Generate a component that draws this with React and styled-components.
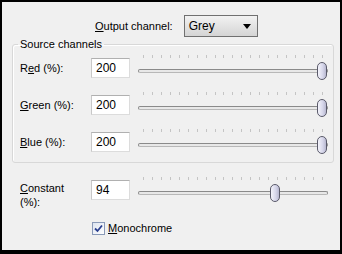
import React from "react";
import styled, { createGlobalStyle } from "styled-components";

const Global = createGlobalStyle`
  html, body { margin: 0; padding: 0; background: #000; }
  body { font-family: Tahoma, "Liberation Sans", Arial, sans-serif; font-size: 11px; color: #000; }
`;

const Frame = styled.div`
  width: 342px;
  height: 254px;
  box-sizing: border-box;
  border: 2px solid #000;
  border-bottom-width: 4px;
  background: #f0f0f0;
  padding-top: 13px;
  display: flex;
  flex-direction: column;
`;

const OutputRow = styled.div`
  display: flex;
  align-items: center;
  padding-left: 93px;
  gap: 11px;
  height: 22px;
`;

const Text = styled.span`
  line-height: 13px;
  white-space: nowrap;
`;

const U = styled.span`
  text-decoration: underline;
  text-underline-offset: 1px;
`;

const Select = styled.div`
  width: 74px;
  height: 22px;
  box-sizing: border-box;
  border: 1px solid #707070;
  background: linear-gradient(#f2f2f2, #e2e2e2 55%, #d4d4d4);
  display: flex;
  align-items: center;
  justify-content: space-between;
  padding: 0 6px 0 4px;
  font-size: 12px;
`;

const Arrow = styled.svg`
  width: 8px;
  height: 5px;
`;

const Group = styled.fieldset`
  margin: 1px 6px 0 10px;
  padding: 3px 3px 8px 7px;
  border: 1px solid #d8d8d8;
  border-radius: 3px;
  box-shadow: inset 1px 1px 0 #fff;
  display: flex;
  flex-direction: column;
  gap: 11px;
  min-width: 0;
`;

const Legend = styled.legend`
  padding: 0 2px;
  margin-left: -2px;
  line-height: 13px;
  font-size: 11px;
`;

const Row = styled.div`
  display: flex;
  align-items: flex-start;
  height: 26px;
  padding-left: ${(p) => p.$indent || 0}px;
  margin-top: ${(p) => p.$top || 0}px;
`;

const Label = styled.label`
  width: 60px;
  margin-right: 11px;
  margin-top: ${(p) => (p.$multi ? 5 : 7)}px;
  line-height: ${(p) => (p.$multi ? 14 : 15)}px;
  display: flex;
  flex-direction: column;
`;

const Line = styled.span`
  display: block;
  white-space: nowrap;
`;

const Input = styled.div`
  width: 39px;
  height: 20px;
  box-sizing: border-box;
  margin-top: 4px;
  margin-right: 8px;
  border: 1px solid #dcdcdc;
  border-top-color: #b0b0b0;
  border-left-color: #c8c8c8;
  background: #fff;
  padding-left: 4px;
  font-size: 12px;
  line-height: 18px;
`;

const Slider = styled.div`
  position: relative;
  width: 190px;
  height: 26px;
`;

const Ticks = styled.div`
  display: flex;
  justify-content: space-between;
  padding: 0 5px;
  margin-top: 1px;
  height: 3px;
`;

const Tick = styled.i`
  width: 1px;
  height: 3px;
  background: #c4c4c4;
`;

const Track = styled.div`
  margin-top: 11px;
  height: 4px;
  box-sizing: border-box;
  border: 1px solid #8a8a8a;
  border-bottom-color: #b8b8b8;
  border-radius: 2px;
  background: #e8e8e8;
`;

const Thumb = styled.div`
  position: absolute;
  top: 8px;
  width: 10px;
  height: 18px;
  box-sizing: border-box;
  border: 1px solid #5a5a6a;
  border-radius: 5px;
  background: linear-gradient(90deg, #f4f4fb, #d6d6ea 60%, #b8b8d0);
`;

const CheckRow = styled.label`
  display: flex;
  align-items: center;
  gap: 3px;
  padding-left: 90px;
  margin-top: 20px;
  height: 13px;
`;

const Box = styled.span`
  width: 13px;
  height: 13px;
  box-sizing: border-box;
  border: 1px solid #8a9ab8;
  background: linear-gradient(135deg, #dde4f0, #ffffff);
  display: flex;
  align-items: center;
  justify-content: center;
`;

const TickMark = styled.svg`
  width: 9px;
  height: 9px;
`;

const MIN = -200;
const MAX = 200;

function SliderCtl({ value }) {
  const frac = (value - MIN) / (MAX - MIN);
  return (
    <Slider>
      <Ticks>
        {Array.from({ length: 21 }).map((_, i) => (
          <Tick key={i} />
        ))}
      </Ticks>
      <Track />
      <Thumb style={{ left: Math.round(frac * 179) }} />
    </Slider>
  );
}

const channels = [
  { pre: "R", key: "e", post: "d (%):", value: 200 },
  { pre: "", key: "G", post: "reen (%):", value: 200 },
  { pre: "", key: "B", post: "lue (%):", value: 200 },
];

export default function App() {
  return (
    <>
      <Global />
      <Frame>
        <OutputRow>
          <Text>
            <U>O</U>utput channel:
          </Text>
          <Select>
            <span>Grey</span>
            <Arrow viewBox="0 0 8 5">
              <path d="M0 0H8L4 5Z" fill="#000" />
            </Arrow>
          </Select>
        </OutputRow>
        <Group>
          <Legend>Source channels</Legend>
          {channels.map((c) => (
            <Row key={c.post}>
              <Label>
                <Line>
                  {c.pre}
                  <U>{c.key}</U>
                  {c.post}
                </Line>
              </Label>
              <Input>{c.value}</Input>
              <SliderCtl value={c.value} />
            </Row>
          ))}
        </Group>
        <Row $indent={18} $top={13}>
          <Label $multi>
            <Line>
              <U>C</U>onstant
            </Line>
            <Line>(%):</Line>
          </Label>
          <Input>94</Input>
          <SliderCtl value={94} />
        </Row>
        <CheckRow>
          <Box>
            <TickMark viewBox="0 0 9 9">
              <path d="M1 4.5L3.5 7L8 1.5" stroke="#2a3f8f" strokeWidth="1.8" fill="none" />
            </TickMark>
          </Box>
          <Text>
            <U>M</U>onochrome
          </Text>
        </CheckRow>
      </Frame>
    </>
  );
}
